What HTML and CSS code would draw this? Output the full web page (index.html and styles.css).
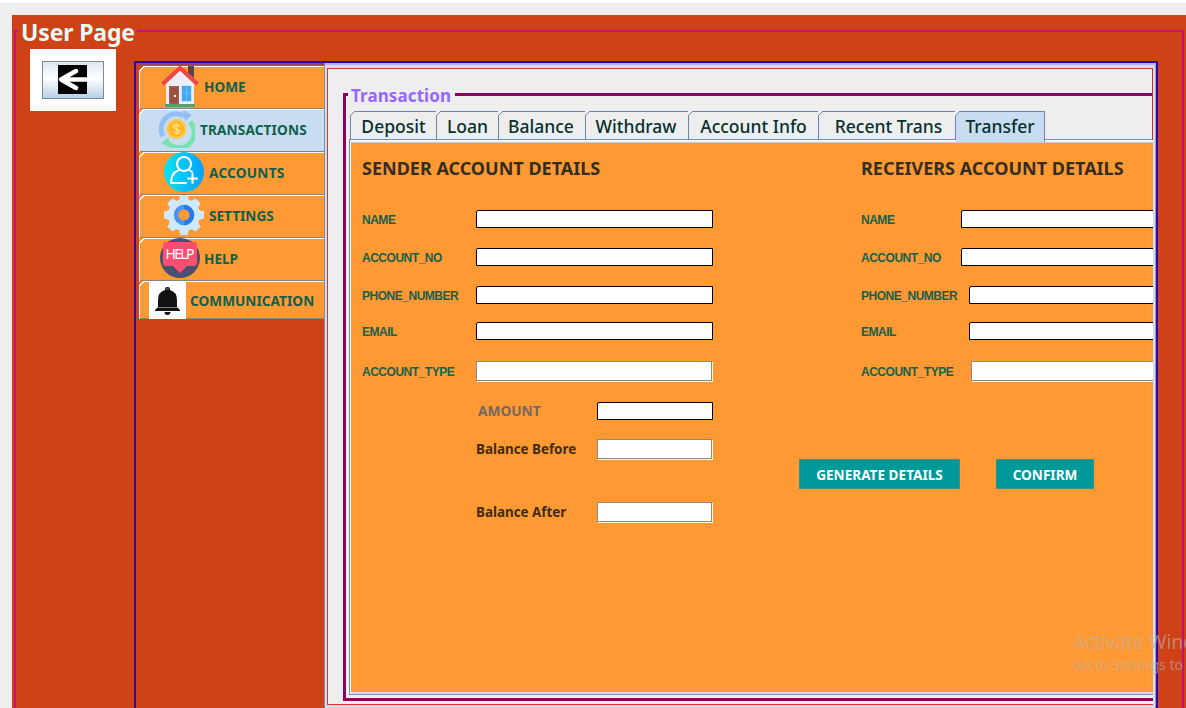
FILE: index.html
```html
<!DOCTYPE html>
<html lang="en">
<head>
<meta charset="utf-8">
<title>User Page</title>
<link rel="stylesheet" href="styles.css">
</head>
<body>
<div class="window">
  <div class="page">
    <section class="user-page">
      <h1 class="page-title"><span>User Page</span></h1>
      <div class="columns">
        <div class="back-box">
          <button class="back" aria-label="Back">
            <svg width="29" height="29" viewBox="0 0 29 29"><rect width="29" height="29"/><path d="M29 14.500H4M18 6 3 14.500 18 23" fill="none" stroke="#fff" stroke-width="4.400" stroke-linecap="round" stroke-linejoin="round"/></svg>
          </button>
        </div>
        <div class="workspace">
          <nav class="side">
            <a class="side-tab home"><svg width="38" height="41" viewBox="0 0 38 41"><path d="M27 0h6v12l-6-5z" fill="#584548"/><path d="M5 18 19 4l14 14v20H5z" fill="#eceff8"/><path d="M4 38h30v3H4z" fill="#4fa568"/><path d="M8 20h10v18H8z" fill="#a65d4b"/><path d="M9.500 21.500h7V37h-7z" fill="#985040"/><circle cx="14" cy="30" r="1.200" fill="#fff"/><path d="M20 19h11v17H20z" fill="#cbe5fb"/><path d="M21 20h9v15h-9z" fill="#42a8f0"/><path d="M25.500 20v15M21 27h9" stroke="#7cc6f8" stroke-width=".7"/><path d="M1.500 18 19 2l17.500 16" fill="none" stroke="#f0474f" stroke-width="4"/></svg><span>HOME</span></a>
            <a class="side-tab transactions active"><svg width="36" height="38" viewBox="0 0 36 38"><path d="M4 26A15 15 0 0 1 25 6" fill="none" stroke="#92bdf5" stroke-width="5"/><path d="m24 0 9 5-7 6z" fill="#92bdf5"/><path d="M31 12A15 15 0 0 1 9 33" fill="none" stroke="#78e4ad" stroke-width="5"/><path d="m10 27-8 6 8 4z" fill="#78e4ad"/><circle cx="17.500" cy="19" r="10" fill="#ffc63f"/><circle cx="17.500" cy="19" r="7.500" fill="#ffb52e"/><path d="M20.500 16c-1-2-6-2-6 .5 0 3 6 2 6 5 0 2.500-5 2.500-6 .3M17.500 13v12" fill="none" stroke="#ffe27b" stroke-width="1.400"/></svg><span>TRANSACTIONS</span></a>
            <a class="side-tab accounts"><svg width="40" height="40" viewBox="0 0 40 40"><defs><linearGradient id="blue"><stop stop-color="#0be4ee"/><stop offset="1" stop-color="#04a0fb"/></linearGradient></defs><circle cx="20" cy="20" r="20" fill="url(#blue)"/><g fill="none" stroke="#fff" stroke-width="2.100" stroke-linecap="round" stroke-linejoin="round"><circle cx="20" cy="12" r="7"/><path d="M14 18.500C8 21 7 26 7 31h15M26 18.500l2 1.500M28.500 22v9M24 26.500h9"/></g></svg><span>ACCOUNTS</span></a>
            <a class="side-tab settings"><svg width="40" height="40" viewBox="0 0 40 40"><g fill="#d0e8fb"><circle cx="20" cy="20" r="16"/><path id="cog" d="m16.500 0h7l2 7h-11zM16.500 40h7l2-7h-11z"/><use href="#cog" transform="rotate(45 20 20)"/><use href="#cog" transform="rotate(90 20 20)"/><use href="#cog" transform="rotate(135 20 20)"/></g><circle cx="20" cy="20" r="8" fill="#ff9933" stroke="#4695f5" stroke-width="4.500"/><path d="M20 12a8 8 0 0 1 0 16" fill="none" stroke="#267be6" stroke-width="4.500"/></svg><span>SETTINGS</span></a>
            <a class="side-tab help"><svg width="40" height="40" viewBox="0 0 40 40"><circle cx="20" cy="20" r="20" fill="#46506f"/><path d="M6 4h28q3 0 3 3v18q0 3-3 3h-7l-7 7-7-7H6q-3 0-3-3V7q0-3 3-3z" fill="#fc4e70"/><text x="20" y="21" text-anchor="middle" textLength="29" class="help-word">HELP</text></svg><span>HELP</span></a>
            <a class="side-tab communication"><svg width="37" height="37" viewBox="0 0 37 37"><path fill="#fff" d="M0 0h37v37H0z"/><path d="M16 6q2.500-2 5 0v2q7 2 7 10v7l3 3v1H6v-1l3-3v-7Q9 10 16 8zM15.500 30h6q0 3-3 3t-3-3z" fill="#111"/><path d="M16.500 7h4M8 25.500h21" stroke="#999" stroke-width=".8"/></svg><span>COMMUNICATION</span></a>
          </nav>
          <main class="content">
            <div class="content-inner">
              <section class="transaction">
                <h2 class="group-title"><span>Transaction</span></h2>
                <div class="tabs">
                  <a class="tab deposit"><span>Deposit</span></a><a class="tab loan"><span>Loan</span></a><a class="tab balance"><span>Balance</span></a><a class="tab withdraw"><span>Withdraw</span></a><a class="tab info"><span>Account Info</span></a><a class="tab recent"><span>Recent Trans</span></a><a class="tab transfer selected"><span>Transfer</span></a>
                </div>
                <form class="panel">
                  <div class="parties">
                    <div class="party sender">
                      <h3><span>SENDER ACCOUNT DETAILS</span></h3>
                      <label>NAME</label><i class="field"></i>
                      <label>ACCOUNT_NO</label><i class="field"></i>
                      <label>PHONE_NUMBER</label><i class="field"></i>
                      <label>EMAIL</label><i class="field"></i>
                      <label>ACCOUNT_TYPE</label><i class="field etched"></i>
                    </div>
                    <div class="party receiver">
                      <h3><span>RECEIVERS ACCOUNT DETAILS</span></h3>
                      <label>NAME</label><i class="field"></i>
                      <label>ACCOUNT_NO</label><i class="field"></i>
                      <label>PHONE_NUMBER</label><i class="field narrow"></i>
                      <label>EMAIL</label><i class="field narrow"></i>
                      <label>ACCOUNT_TYPE</label><i class="field etched narrower"></i>
                    </div>
                  </div>
                  <div class="lower">
                    <div class="amounts">
                      <label class="amount">AMOUNT</label><i class="field"></i>
                      <label class="before">Balance Before</label><i class="field etched"></i>
                      <label class="after">Balance After</label><i class="field etched"></i>
                    </div>
                    <div class="actions">
                      <button type="button" class="generate"><span>GENERATE DETAILS</span></button>
                      <button type="button" class="confirm"><span>CONFIRM</span></button>
                    </div>
                  </div>
                </form>
              </section>
            </div>
          </main>
        </div>
      </div>
    </section>
  </div>
</div>
<aside class="watermark"><p class="wm-title">Activate Wind</p><p class="wm-text">Go to Settings to</p></aside>
</body>
</html>
```
FILE: styles.css
```css
* { box-sizing: border-box; margin: 0; padding: 0; }
body { width: 1186px; height: 708px; overflow: hidden; background: #fff; padding-top: 3px; font-family: "Noto Sans", "Open Sans", sans-serif; font-weight: 700; }
span, label { white-space: nowrap; }
svg { display: block; flex: none; }
.window { height: 705px; background: #eee; padding: 12px 0 0 12px; }
.page { height: 693px; background: #cf4117; padding: 15px 2px 0; }
.user-page { height: 678px; border: 2px solid #c90d7c; border-bottom: 0; }
.page-title { width: 119px; height: 19px; margin: -2px 0 0 2px; background: #cf4117; padding-left: 3px; font-size: 23px; line-height: 4px; color: #e3fbf4; letter-spacing: -.15px; }
.columns { display: flex; align-items: flex-start; padding-left: 14px; }
.back-box { width: 86px; height: 62px; background: #fff; padding: 12px; flex: none; }
.back { width: 62px; height: 38px; border: 1px solid #7a8a99; background: linear-gradient(#dce7f3, #fff 45%, #b8cfe5); display: flex; align-items: center; justify-content: center; }
.back svg { margin: -1px 1px 0 0; }
.workspace { display: flex; width: 1024px; height: 647px; margin: 12px 0 0 18px; border: 2px solid #3404a5; border-bottom: 0; flex: none; box-shadow: inset 0 2px #9a4258; padding-left: 3px; }
.side { width: 185px; padding-top: 3px; flex: none; }
.side-tab { position: relative; height: 43px; display: flex; align-items: center; padding-bottom: 4px; border: solid #fff; border-width: 1px 0 0 1px; background: #ff9933; font-size: 13.600px; color: #0f604c; box-shadow: inset 0 -1px #8c8279; }
.side-tab::before, .tab::before { content: ""; position: absolute; left: -1px; top: -1px; width: 6px; height: 6px; background: linear-gradient(135deg, #ff9933 0 3px, #fff 3px 4.300px, transparent 4.300px); }
.side-tab.home::before { background: linear-gradient(135deg, #cf4117 0 3px, #fff 3px 4.300px, transparent 4.300px); }
.side-tab.active { background-color: #c8ddf2; }
.side-tab svg { position: relative; }
.home { padding-left: 21px; gap: 5px; }
.transactions { padding-left: 19px; gap: 5px; letter-spacing: .15px; }
.accounts { padding-left: 24px; gap: 5px; letter-spacing: .25px; }
.settings { padding-left: 24px; gap: 5px; }
.help { padding-left: 20px; gap: 4px; }
.side-tab.communication { padding: 0 0 1px 9px; gap: 4px; height: 38px; letter-spacing: .05px; }
.help-word { font: 400 14px "Noto Sans", sans-serif; fill: #fff; }
.content { flex: 1; min-width: 0; height: 645px; border-left: 1px solid #7390b7; background: #d5dce6; padding: 5px 3px 0 2px; box-shadow: inset 0 2px #a4b8ed, inset -1px 0 #8da7cf; }
.content-inner { height: 637px; background: #eee; border: 1px solid #d03a26; padding: 24px 0 3px 15px; overflow: hidden; border-right-width: 0; position: relative; }
.content-inner::after { content: ""; position: absolute; right: 0; top: 0; width: 1px; height: 71px; background: #c92c25; }
.transaction { width: 830px; height: 608px; border: 3px solid #87055f; }
.group-title { width: 107px; height: 15px; margin: -3px 0 0 2px; padding-left: 3px; background: #eee; color: #9568ff; font-size: 17px; line-height: 6px; letter-spacing: .1px; }
.tabs { display: flex; height: 29px; margin: 3px 0 0 4px; }
.tab { position: relative; height: 29px; border: 1px solid #7382a8; border-width: 1px 1px 0 0; display: flex; align-items: center; justify-content: center; font-size: 17.500px; font-weight: 500; color: #07302f; }
.tab::before { background: linear-gradient(135deg, #eee 0 3.200px, #76849c 3.200px 4.200px, transparent 4.200px); }
.tab.selected { background-color: #c8ddf2; height: 31px; padding-bottom: 2px; z-index: 1; }
.deposit { width: 87px; border-left-width: 1px; }
.loan { width: 62px; }
.balance { width: 87px; padding-right: 2px; }
.withdraw { width: 103px; padding-right: 2px; }
.info { width: 130px; }
.recent { width: 137px; padding-left: 3px; }
.transfer { width: 89px; }
.panel { height: 556px; margin: -1px 0 0 3px; border: 1px solid #7390b7; background: #ff9933; box-shadow: inset 0 2px #f6f6f6, inset 0 3px #c9c9cc, inset 1px 0 #fff, inset 0 -2px #dedbd4; padding: 3px 0 0 12px; }
.parties { display: flex; }
.party { display: grid; grid-template-rows: 57px 38px 38px 38px 34px 46px; align-items: center; flex: none; }
.sender { width: 499px; grid-template-columns: 114px 237px; }
.receiver { grid-template-columns: 100px 260px; }
h3 { grid-column: 1 / 3; padding-bottom: 7px; color: #352d20; font-size: 18px; }
.party label { font: 700 12px "Liberation Sans", Arial, sans-serif; color: #17604b; letter-spacing: -.48px; padding-top: 1px; }
.field { display: block; height: 18px; background: #fff; border: 1px solid #000; border-radius: 2px 0 0 0; }
.etched { height: 20px; border-color: #8c8b82; border-radius: 0; box-shadow: inset -1px -1px #fff, 1px 1px #fff8dc; margin-right: 1px; }
.narrow { margin-left: 8px; }
.narrower { margin-left: 10px; }
.lower { display: flex; }
.amounts { width: 437px; padding-left: 114px; display: grid; grid-template-columns: 121px 116px; grid-template-rows: 34px 42px 84px; align-items: center; flex: none; }
.amounts label { font-size: 13.400px; color: #3c2c17; }
.amounts .amount { color: #756860; padding: 0 0 2px 2px; font-size: 13.700px; }
.actions { display: flex; gap: 36px; padding-top: 65px; }
.actions button { height: 30px; background: #009999; border: 1px solid #3e8f87; color: #fff; font: 700 13.600px "Noto Sans", sans-serif; text-align: center; }
.actions .generate { width: 161px; }
.actions .confirm { width: 98px; }
.watermark { position: absolute; left: 1073px; top: 628px; width: 113px; height: 50px; overflow: hidden; white-space: nowrap; color: rgba(185, 178, 170, .62); font-weight: 400; pointer-events: none; }
.wm-title { font-size: 19px; line-height: 28px; }
.wm-text { font-size: 14px; line-height: 18px; }
```
